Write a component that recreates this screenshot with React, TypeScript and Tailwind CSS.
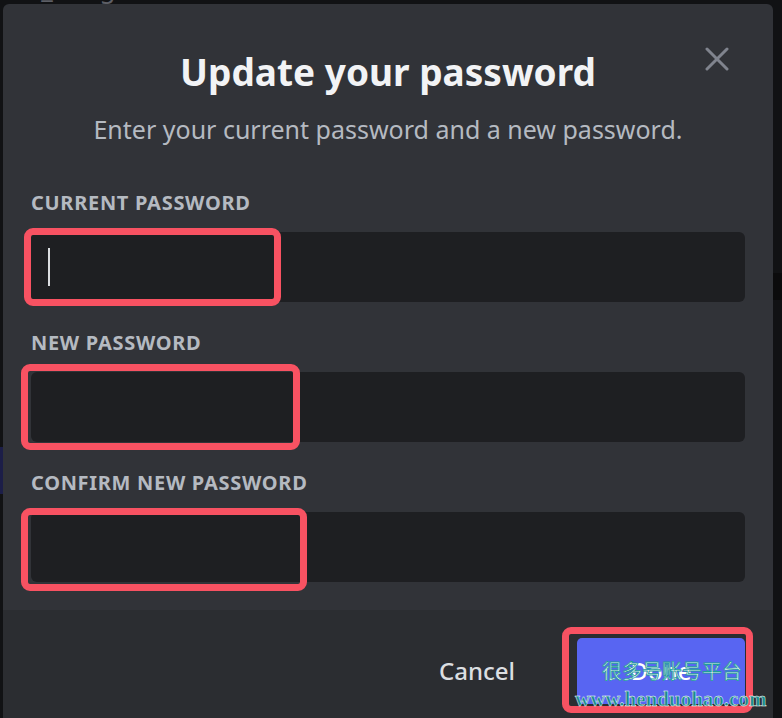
import type { ReactNode } from "react";

// ── Sub-components ─────────────────────────────────────────────────────────────

function Highlight({ className }: { className: string }) {
  return (
    <div
      className={`pointer-events-none absolute rounded-[9px] border-[7px] border-[#f85262] ${className}`}
    />
  );
}

function Field({
  label,
  highlight,
  children,
}: {
  label: string;
  highlight: string;
  children?: ReactNode;
}) {
  return (
    <div>
      <div className="text-[20px] font-bold uppercase leading-[24px] tracking-[0.035em] text-[#b5bac1]">
        {label}
      </div>
      <div className="relative mt-[17px] h-[70px] rounded-[6px] bg-[#1e1f22]">
        {children}
        <Highlight className={highlight} />
      </div>
    </div>
  );
}

// ── Page ───────────────────────────────────────────────────────────────────────

export default function App() {
  return (
    <div className="relative flex h-[718px] w-[782px] overflow-hidden bg-[#111214] font-['Noto_Sans',sans-serif]">
      {/* left edge of the app behind the overlay */}
      <div className="flex w-[3px] flex-col">
        <div className="h-[447px]" />
        <div className="h-[47px] bg-[#1c1e48]" />
      </div>

      <div className="flex w-[770px] flex-col">
        <div className="h-[4px] overflow-hidden">
          <div className="-mt-[26px] pl-[5px] text-[26px] leading-[28px] text-[#5d5f66]">
            lliv_benguence
          </div>
        </div>

        {/* Modal */}
        <div className="relative flex flex-1 flex-col overflow-hidden rounded-t-[6px] bg-[#313338]">
          <button
            type="button"
            className="absolute right-[44px] top-[43px] text-[#80848e]"
          >
            <svg width="24" height="24" viewBox="0 0 24 24" fill="none">
              <path
                d="M2 2L22 22M22 2L2 22"
                stroke="currentColor"
                strokeWidth="3"
                strokeLinecap="round"
              />
            </svg>
          </button>

          <div className="px-[28px] pb-[28px] pt-[46px]">
            <h1 className="text-center text-[37px] font-bold leading-[44px] text-[#f2f3f5]">
              Update your password
            </h1>
            <p className="mt-[19px] text-center text-[25px] leading-[32px] text-[#b5bac1]">
              Enter your current password and a new password.
            </p>

            <div className="mt-[46px] space-y-[29px]">
              <Field label="Current Password" highlight="-left-[7px] -top-[4px] h-[78px] w-[257px]">
                <div className="absolute left-[17px] top-[16px] h-[38px] w-[2px] bg-[#dbdee1]" />
              </Field>
              <Field label="New Password" highlight="-left-[10px] -top-[8px] h-[86px] w-[279px]" />
              <Field label="Confirm New Password" highlight="-left-[10px] -top-[4px] h-[83px] w-[286px]" />
            </div>
          </div>

          {/* Footer */}
          <div className="flex flex-1 items-start justify-end bg-[#2b2d31] pr-[28px] pt-[28px]">
            <div className="flex items-center">
              <button
                type="button"
                className="mr-[62px] text-[24px] font-medium leading-[32px] text-[#dbdee1]"
              >
                Cancel
              </button>
              <div className="relative">
                <button
                  type="button"
                  className="h-[66px] w-[168px] rounded-[5px] bg-[#5865f2] text-[24px] font-medium text-white"
                >
                  Done
                </button>
                <Highlight className="-left-[15px] -top-[11px] h-[86px] w-[191px]" />
              </div>
            </div>
          </div>
        </div>
      </div>

      <div className="flex flex-1 flex-col">
        <div className="h-[273px]" />
        <div className="h-[27px] bg-[#0b0b0c]" />
      </div>

      {/* site watermark */}
      <div className="pointer-events-none absolute left-[602px] top-[661px] font-['Noto_Sans_CJK_SC',sans-serif] text-[20px] leading-[20px] text-white [-webkit-text-stroke:0.8px_#1f9c9c]">
        很多号账号平台
      </div>
      <div className="pointer-events-none absolute left-[575px] top-[689px] font-['Liberation_Serif',serif] text-[21px] font-bold leading-[21px] text-[#1a8c8c] [-webkit-text-stroke:0.4px_#ffffff]">
        www.henduohao.com
      </div>
    </div>
  );
}
